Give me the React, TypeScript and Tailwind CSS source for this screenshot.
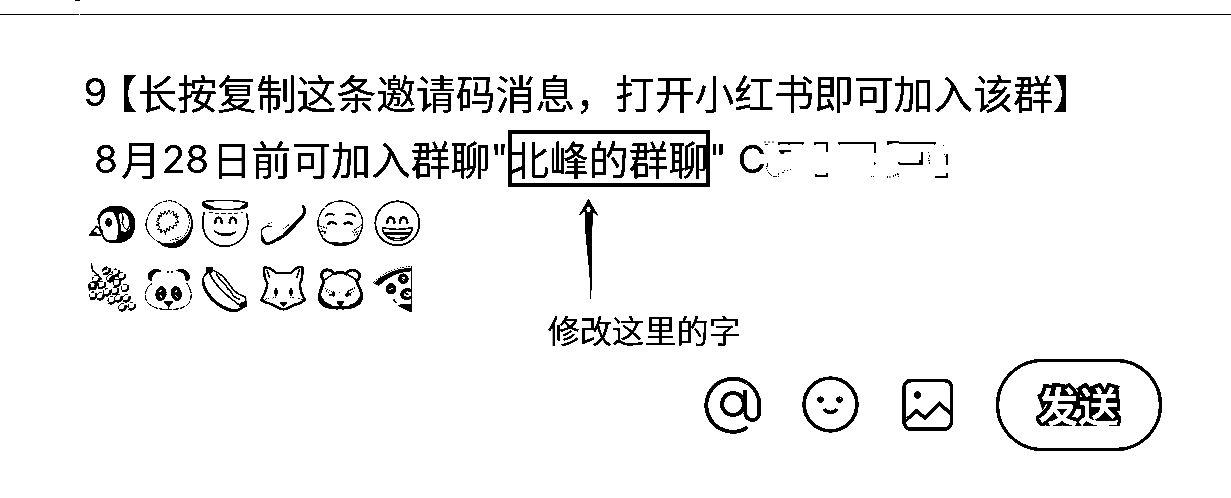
import type { ReactNode } from 'react';

function Emoji({ box, label, children }: { box: string; label: string; children: ReactNode }) {
  return (
    <svg viewBox={box} role="img" aria-label={label} className="h-[64.667px] w-[57.333px]" fill="none" stroke="black" strokeWidth="5" strokeLinecap="round" strokeLinejoin="round">
      {children}
    </svg>
  );
}

const grapes = [
  [78, 243], [106, 249], [124, 260], [90, 266], [48, 268], [36, 288], [64, 286], [110, 280], [134, 295],
  [80, 308], [104, 304], [38, 318], [60, 320], [94, 332], [114, 326], [138, 326], [126, 353], [154, 350],
];

function Emojis() {
  return (
    <div className="grid w-[344px] shrink-0 grid-cols-6 pt-[0.67px]">
      <Emoji box="20 20 172 194" label="bird">
        <path d="M55 86C60 62 82 50 108 50C142 50 162 74 161 104C160 136 140 154 108 154L82 152" strokeWidth="7" />
        <path d="M58 82C66 56 96 47 126 53C149 58 162 80 161 105L153 100C149 81 140 67 126 66L118 64L114 79L100 64C84 58 68 67 58 82Z" fill="black" strokeWidth="2" />
        <path d="M103 66C119 91 122 124 112 152" strokeWidth="8" />
        <path d="M123 68C130 76 129 88 125 96C130 108 132 116 140 118C150 112 148 88 144 74" strokeWidth="3" />
        <path d="M155 80V128" strokeWidth="10" strokeDasharray="12 2" strokeLinecap="butt" />
        <path d="M122 124L136 126L148 117L158 126C150 144 138 153 118 156Z" fill="black" strokeWidth="2" />
        <ellipse cx="85" cy="96" rx="7" ry="10" fill="black" />
        <circle cx="88" cy="91" r="2.5" fill="white" stroke="none" />
        <path d="M56 87C56 108 60 117 66 124C65 143 73 151 91 154M49 108L28 134H60L66 129M48 108C56 112 62 120 64 132M30 130L47 128" strokeWidth="4" />
      </Emoji>
      <Emoji box="192 20 172 194" label="kiwi fruit">
        <path d="M253 163C222 151 200 132 198 102C202 65 229 34 261 32C280 28 298 40 313 53" strokeWidth="3" strokeDasharray="12 4" />
        <path d="M313 53C335 68 340 97 334 119C325 149 306 169 278 170C262 170 246 163 236 154" strokeWidth="5" />
        <path d="M302 44C326 60 333 90 324 117C315 140 298 155 277 158" strokeWidth="2" strokeDasharray="6 4" />
        <path d="M255 160L285 161L307 149L324 132L335 108C333 142 305 170 276 170Z" fill="black" strokeWidth="2" />
        <path d="M270 151L305 137M286 146L302 152" strokeWidth="3" strokeDasharray="3 5" />
        <path d="M228 93L236 90L231 84L240 84L235 75L246 78L242 67L251 73L255 62L260 72L268 59L271 71L280 62L281 76L290 69L287 81L296 77L290 88L296 96L285 96L291 107L280 105L280 115L270 108L267 122L261 113L256 133L253 119L242 128L244 116L232 119L240 108L228 105L238 100Z" strokeWidth="2.5" strokeDasharray="10 3" />
      </Emoji>
      <Emoji box="364 20 172 194" label="halo face">
        <path d="M373 68C364 101 371 137 395 154C421 174 455 171 480 152C503 132 509 104 501 71" strokeWidth="4.5" />
        <path d="M369 36C389 28 477 28 502 38C511 51 490 57 440 57C388 58 366 52 369 36Z" strokeWidth="4" />
        <path d="M372 38C388 45 393 48 403 52L389 56C375 53 367 47 372 38ZM503 38L481 52L502 50Z" fill="black" strokeWidth="3" />
        <path d="M389 66C416 71 462 71 488 66" strokeWidth="2" strokeDasharray="10 9" />
        <path d="M407 98C407 76 425 76 426 98M450 98C451 76 468 76 469 98" strokeWidth="6.5" />
        <path d="M404 122C419 139 455 142 469 124C452 134 422 134 404 122Z" fill="black" strokeWidth="3" />
      </Emoji>
      <Emoji box="26 20 172 194" label="baguette">
        <path d="M33 132C30 112 45 107 64 108" strokeWidth="3" strokeDasharray="10 3" />
        <path d="M33 133C27 163 54 170 76 153C103 143 125 121 137 105L158 82C170 67 167 56 160 44L156 45L160 62C158 82 135 88 128 103L105 124L96 136C76 142 64 160 47 156Z" fill="black" strokeWidth="2" />
        <path d="M99 115L115 104M51 108L56 99M62 98L66 94" strokeWidth="3" strokeDasharray="3 5" />
      </Emoji>
      <Emoji box="198 20 172 194" label="masked face">
        <circle cx="271" cy="99" r="67" strokeWidth="3.5" strokeDasharray="28 5" />
        <path d="M218 144C239 168 306 168 325 143M240 156C255 160 287 160 304 156" strokeWidth="4" />
        <path d="M227 76C235 69 245 70 251 73M289 72C301 69 310 73 315 77" strokeWidth="5" />
        <path d="M235 101C238 94 248 93 257 100M284 100C293 94 302 95 305 101" strokeWidth="7" />
        <path d="M205 106L230 113M208 122L230 126M214 114L225 130M335 104L307 124M335 121L306 128M312 134L330 129" strokeWidth="3" strokeDasharray="3 5" />
      </Emoji>
      <Emoji box="370 20 172 194" label="grinning face">
        <circle cx="443" cy="99" r="66" strokeWidth="4.5" />
        <path d="M413 97C414 76 433 76 434 97M451 97C452 76 471 76 473 97" strokeWidth="7" />
        <path d="M398 112C426 118 461 118 488 112C486 136 468 150 443 151C417 150 400 135 398 112ZM409 137C428 147 457 147 476 137" strokeWidth="3.5" />
        <path d="M402 124H484L479 133H407Z" fill="black" stroke="none" />
      </Emoji>

      <Emoji box="20 214 172 194" label="grapes">
        <path d="M33 223L37 243L52 255L62 268" strokeWidth="4" />
        {grapes.map(([x, y]) => (
          <g key={`${x}-${y}`}>
            <circle cx={x} cy={y} r="11" fill="white" strokeWidth="2.5" strokeDasharray="9 6" />
            <path d={`M${x + 10} ${y - 5}Q${x + 12} ${y + 10} ${x - 7} ${y + 9}`} strokeWidth="6" />
          </g>
        ))}
        <path d="M70 240L78 236M28 300V284M88 268L96 262M50 284L44 298M32 326H44" strokeWidth="6" />
      </Emoji>
      <Emoji box="192 214 172 194" label="panda">
        <path d="M216 282C189 298 190 335 213 347C234 364 297 364 319 348C341 331 336 301 320 280" strokeWidth="3" strokeDasharray="16 5" />
        <path d="M214 272L207 270L206 253C218 236 235 238 243 244C226 243 215 252 214 272ZM290 243C299 237 323 238 327 256V270L319 273C317 253 309 245 290 243Z" fill="black" strokeWidth="3" />
        <path d="M263 247H284" strokeWidth="3" strokeDasharray="2 10" />
        <ellipse cx="243" cy="312" rx="15" ry="21" fill="black" strokeWidth="2" transform="rotate(12 243 312)" />
        <ellipse cx="289" cy="312" rx="15" ry="21" fill="black" strokeWidth="2" transform="rotate(-12 289 312)" />
        <path d="M239 307L244 302M240 317L245 323M286 307L291 302M287 317L292 323" stroke="white" strokeWidth="4" />
        <path d="M254 336H277L267 348Z" fill="black" />
        <path d="M266 351V359" strokeWidth="2" />
      </Emoji>
      <Emoji box="364 214 172 194" label="hot dog">
        <path d="M384 249C372 257 368 270 369 282C378 318 405 344 433 357C450 367 475 370 485 356M389 249C399 274 425 302 449 323L478 345M402 243C420 249 429 259 439 271C452 285 458 303 477 313L498 323V339" strokeWidth="4" />
        <path d="M370 271C370 299 401 340 440 356C456 363 472 365 483 356" strokeWidth="7" strokeDasharray="17 5" />
        <path d="M410 252C420 274 438 280 444 298C456 302 455 322 478 328" strokeWidth="4" strokeDasharray="8 3" />
        <path d="M381 234L397 236L395 247L382 247ZM485 341L499 338L498 349L488 354L482 349Z" fill="black" strokeWidth="6" />
      </Emoji>
      <Emoji box="26 214 172 194" label="fox">
        <path d="M42 233C55 233 67 239 77 250H122C133 236 147 231 156 232C157 252 156 270 149 282C149 300 156 319 165 331L147 341C128 343 116 358 99 359C83 358 69 342 50 340L33 331C39 318 50 303 51 281C43 268 40 250 42 233Z" strokeWidth="6.5" />
        <path d="M50 242L58 264M147 241L140 262" strokeWidth="4" />
        <ellipse cx="77" cy="307" rx="4" ry="10" fill="black" strokeWidth="3" />
        <ellipse cx="122" cy="307" rx="4" ry="10" fill="black" strokeWidth="3" />
        <path d="M91 340H108L100 349Z" fill="black" />
        <path d="M67 325L80 321M119 322L134 326M38 330L55 326M145 326L162 331" strokeWidth="2.5" strokeDasharray="3 5" />
      </Emoji>
      <Emoji box="198 214 172 194" label="bear">
        <path d="M222 272C207 257 218 239 234 241C244 242 250 247 252 253C264 247 278 247 289 253C294 241 310 237 322 246C333 254 330 267 320 274C323 290 337 302 335 321C335 341 314 353 294 354H248C223 352 204 341 209 317C209 302 219 290 222 272Z" strokeWidth="8" />
        <path d="M227 269L246 255M317 269L294 255" strokeWidth="4" />
        <path d="M211 322C217 336 228 345 243 349M332 323C326 337 314 347 301 349" strokeWidth="8" />
        <path d="M226 296L247 307M229 304L250 320M314 295L295 304M312 304L289 320M239 316H258M286 316H307M268 307L272 311" strokeWidth="3" strokeDasharray="2 5" />
        <ellipse cx="250" cy="313" rx="3" ry="7" fill="black" strokeWidth="3" />
        <ellipse cx="294" cy="313" rx="3" ry="7" fill="black" strokeWidth="3" />
        <path d="M262 337H280L271 348Z" fill="black" />
        <path d="M271 349V355L260 359M271 355L281 359" strokeWidth="3" />
      </Emoji>
      <Emoji box="370 214 172 194" label="pizza">
        <path d="M376 281C401 254 447 237 485 237V243C453 243 416 257 387 286Z" fill="black" strokeWidth="4" strokeDasharray="9 2" />
        <path d="M372 278C405 245 450 231 486 230" strokeWidth="2" strokeDasharray="3 6" />
        <path d="M486 230V365" strokeWidth="3" />
        <circle cx="424" cy="297" r="11.5" strokeWidth="9" />
        <circle cx="461" cy="267" r="11" strokeWidth="9" />
        <path d="M483 302C468 297 456 304 457 316C460 326 472 327 483 324" strokeWidth="9" />
        <path d="M419 296L428 293M424 302L432 299M455 266L467 271M465 309L478 317M433 331L440 339" strokeWidth="4" strokeDasharray="3 5" />
        <path d="M448 348C461 343 477 349 484 346V365Z" fill="black" strokeWidth="4" />
      </Emoji>
    </div>
  );
}

export default function App() {
  return (
    <main className="flex h-[498px] w-[1231px] flex-col overflow-hidden bg-white font-['Noto_Sans_CJK_SC',sans-serif] text-black brightness-[0.75] contrast-[30]">
      <header className="flex h-[15px] shrink-0 flex-col justify-between">
        <span className="ml-[75px] h-px w-[5px] bg-black" />
        <div className="flex h-px gap-px">
          <span className="w-[79px] bg-black" />
          <span className="grow bg-black" />
        </div>
      </header>

      <p className="mt-[45px] flex h-16 shrink-0 items-center pl-[83.5px] text-[39.8px] leading-none whitespace-nowrap">
        <span className="w-[34px] pt-px font-['Inter',sans-serif] text-[38.5px]">9</span>
        <span className="[font-feature-settings:'halt']">【</span>
        <span>长按复制这条邀请码消息，打开小红书即可加入该群】</span>
      </p>

      <div className="flex h-[68px] shrink-0 items-center pl-[94px] text-[39.8px] leading-none whitespace-nowrap">
        <span className="w-[27px] pt-[2px] font-['Inter',sans-serif] text-[38.5px]">8</span>
        <span>月</span>
        <span className="w-[51px] pt-[2px] pl-px font-['Inter',sans-serif] text-[38.5px]">28</span>
        <span>日前可加入群聊</span>
        <span className="w-[17.4px] font-['Inter',sans-serif] text-[38.5px]">"</span>
        <span className="flex h-[57px] w-[202px] items-center justify-center border-4 border-black">北峰的群聊</span>
        <span className="-ml-px w-[29px] font-['Inter',sans-serif] text-[38.5px]">"</span>
        <span className="w-[26px] pt-[2px] font-['Inter',sans-serif] text-[38.5px]">C</span>
        <svg viewBox="105 38 555 120" className="mt-[3px] h-10 w-[185px]" fill="none" stroke="black" strokeWidth="3">
          <path d="M105 44H138M109 51H117" strokeWidth="2" strokeDasharray="8 3" />
          <path d="M150 47H221M151 44V53M180 47V52M221 44V52M151 71H186M154 76H166M258 47H293M259 44V53M293 44V75M258 147H293M260 140V149M293 137V149M330 47H437M331 44V52M437 44V77M437 105V112M474 44H510M475 50L496 44M510 47H617M617 44V52M510 110H580M511 104V112M579 74V111M574 98V108M619 149H654V137M653 79V113" strokeWidth="4.5" />
          <path d="M117 108L112 124L119 138L132 147H149V137M161 137L168 127M174 130H178M182 126H187M598 74V80M602 84L599 96L602 111M645 80L652 92M425 148H437M474 149H486M492 147L509 138V149M643 54V57" strokeDasharray="4 3" />
        </svg>
      </div>

      <section className="flex h-[167px] shrink-0 items-start pt-1 pl-[86.67px]">
        <Emojis />
        <div className="ml-[117px] flex flex-col">
          <svg viewBox="0 0 65 105" className="ml-[30px] h-[105px] w-[30px]" preserveAspectRatio="xMinYMin slice">
            <path d="M10.5 3L20.5 20L14.5 16L14 58V77L13 103H12.5L11.5 77L9.5 58L7 31V15L0.5 20Z" fill="black" />
            <ellipse cx="10.5" cy="13.5" rx="2.2" ry="2.8" fill="white" />
          </svg>
          <span className="mt-[12px] text-[32.2px] leading-8">修改这里的字</span>
        </div>
      </section>

      <footer className="flex h-[92px] shrink-0 items-center pl-[704px]">
        <svg viewBox="0 0 60 60" aria-label="mention" className="h-[60px] w-[60px]" fill="none" stroke="black" strokeWidth="3.6">
          <path d="M43.5 52.3A26.5 26.5 0 1 1 55.3 29V37C55.3 48 41 48 41 36V15.5" />
          <circle cx="29" cy="29" r="11" />
          <path d="M38 22L41 28M39 38L42 34M42 8L52 20" stroke="white" strokeWidth="1" strokeDasharray="1 2" />
        </svg>
        <svg viewBox="0 0 60 60" aria-label="emoji" className="ml-[37px] h-[60px] w-[60px]" fill="none" stroke="black" strokeWidth="3.4">
          <circle cx="29.5" cy="29.5" r="26.4" />
          <circle cx="19.5" cy="24.5" r="3.1" fill="black" stroke="none" />
          <circle cx="38.5" cy="24.5" r="3.1" fill="black" stroke="none" />
          <path d="M23.5 34C26 38.5 33 38.5 35.5 34" />
          <path d="M39 23h1v1h-1z" fill="white" stroke="none" />
        </svg>
        <svg viewBox="0 0 54 54" aria-label="image" className="ml-[40px] h-[54px] w-[54px]" fill="none" stroke="black" strokeWidth="3.4">
          <rect x="3" y="2.5" width="47.5" height="48.5" rx="7" />
          <circle cx="16.5" cy="17" r="3.6" fill="black" stroke="none" />
          <path d="M4 43L15.5 33L24 40L38.5 25.5L50 36" />
          <path d="M5 40L9 43M49 29L47 34M46 6L49 9" stroke="white" strokeWidth="1" strokeDasharray="1 2" />
        </svg>
        <button className="ml-[41px] flex h-[92px] w-[166px] items-center justify-center rounded-full border-[3px] border-black text-[40.5px] leading-[60px] font-bold text-white">
          <span className="mr-px w-[84px] text-center [-webkit-text-stroke:7px_black] [clip-path:inset(8px_0_9px_0)] [paint-order:stroke_fill]">发送</span>
        </button>
      </footer>
    </main>
  );
}
